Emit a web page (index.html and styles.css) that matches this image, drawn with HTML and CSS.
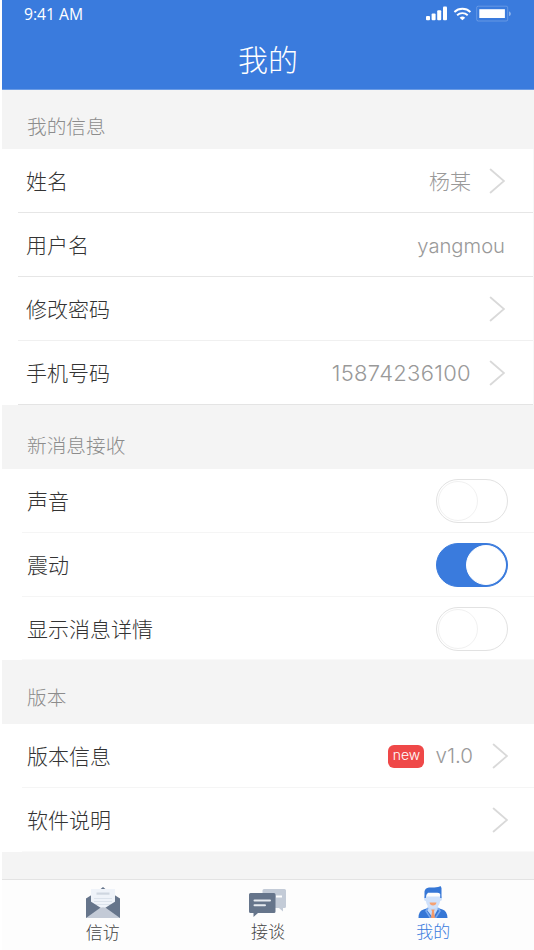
FILE: index.html
```html
<!DOCTYPE html>
<html lang="zh-CN">
<head>
    <meta charset="UTF-8">
    <meta name="viewport" content="width=device-width, initial-scale=1.0">
    <title>我的</title>
    <link rel="stylesheet" href="styles.css">
</head>
<body>

<div class="app">
    <header class="header">
        <div class="status-bar">
            <span class="time">9:41 AM</span>
            <svg class="status-icons" width="86" height="18" viewBox="0 0 86 18">
                <g fill="#fff">
                    <rect x="1" y="12" width="4" height="4.2" rx="1"/>
                    <rect x="6.6" y="9.4" width="4" height="6.8" rx="1"/>
                    <rect x="12.2" y="6.2" width="4" height="10" rx="1"/>
                    <rect x="18" y="2.6" width="4" height="13.6" rx="1"/>
                    <rect x="54.3" y="5.2" width="25.6" height="8.8"/>
                    <path d="M34.6 13.7a4.4 4.4 0 0 1 5.6 0L37.4 16.2z"/>
                </g>
                <g fill="none" stroke="#fff" stroke-width="1.9">
                    <path d="M29.4 8a11.6 11.6 0 0 1 16 0"/>
                    <path d="M32.1 11.2a7.7 7.7 0 0 1 10.6 0"/>
                </g>
                <rect x="51.7" y="2.2" width="31" height="14.8" rx="1.5" fill="none" stroke="#fff" stroke-opacity=".22"/>
                <path d="M84.2 7.4c2 .6 2 4 0 4.6z" fill="#fff" fill-opacity=".5"/>
            </svg>
        </div>
        <h1>我的</h1>
    </header>

    <main>
        <h2 class="group-title first">我的信息</h2>
        <ul class="list info">
            <li><span class="label">姓名</span><span class="value cjk">杨某</span><svg class="arrow" viewBox="0 0 16 26"><path d="M1.6 1.5 15 13 1.6 24.5"/></svg></li>
            <li><span class="label">用户名</span><span class="value name">yangmou</span></li>
            <li><span class="label">修改密码</span><svg class="arrow" viewBox="0 0 16 26"><path d="M1.6 1.5 15 13 1.6 24.5"/></svg></li>
            <li><span class="label">手机号码</span><span class="value phone">15874236100</span><svg class="arrow" viewBox="0 0 16 26"><path d="M1.6 1.5 15 13 1.6 24.5"/></svg></li>
        </ul>

        <h2 class="group-title message">新消息接收</h2>
        <ul class="list switches">
            <li><span class="label">声音</span><span class="switch"></span></li>
            <li><span class="label">震动</span><span class="switch on"></span></li>
            <li><span class="label">显示消息详情</span><span class="switch"></span></li>
        </ul>

        <h2 class="group-title version">版本</h2>
        <ul class="list">
            <li><span class="label">版本信息</span><span class="badge">new</span><span class="value ver">v1.0</span><svg class="arrow" viewBox="0 0 16 26"><path d="M1.6 1.5 15 13 1.6 24.5"/></svg></li>
            <li><span class="label">软件说明</span><svg class="arrow" viewBox="0 0 16 26"><path d="M1.6 1.5 15 13 1.6 24.5"/></svg></li>
        </ul>
    </main>

    <nav class="tabs">
        <a class="tab">
            <!-- envelope -->
            <svg width="34" height="32" viewBox="0 0 34 32">
                <path d="M14 2.5 17 0l3 2.5z" fill="#66758b"/>
                <path d="M0 11.5 5.5 8h23l5.5 3.5V31H0z" fill="#66758b"/>
                <path d="M5 2h24v19H5z" fill="#eff3f9"/>
                <path d="M10.5 5.5h13v2.2h-13z" fill="#cfd6e0"/>
                <path d="M8 11.5h18M8 14.5h18M8 17.5h18" stroke="#dbe2eb"/>
                <path d="M0 11.5 15 21 0 31zM34 11.5 19 21l15 10z" fill="#66758b"/>
                <path d="M0 31 14 21q3-1.5 6 0l14 10z" fill="#c3cad6"/>
            </svg>
            <span>信访</span>
        </a>
        <a class="tab">
            <!-- chat bubbles -->
            <svg width="38" height="30" viewBox="0 0 38 30">
                <path d="M15 1h20.5q1.5 0 1.5 1.5v16q0 1.5-1.5 1.5H34v3.5L30 20H15q-1.5 0-1.5-1.5V2.5Q13.5 1 15 1z" fill="#c3cbd7"/>
                <path d="M27 8.5h6" stroke="#fff" stroke-width="2"/>
                <path d="M1.5 5h23.5q1.5 0 1.5 1.5v17q0 1.5-1.5 1.5H9l-4.5 4V25h-3Q0 25 0 23.5v-17Q0 5 1.5 5z" fill="#66758b"/>
                <path d="M5.5 12.5h15.5M5.5 17.3h10.5" stroke="#e6eaf0" stroke-width="2" stroke-linecap="round"/>
            </svg>
            <span>接谈</span>
        </a>
        <a class="tab active">
            <!-- user -->
            <svg width="30" height="32" viewBox="0 0 30 32">
                <path d="M.5 32q0-7.5 5-8.5l6-2h7l6 2q4.5 1 5 8.5z" fill="#3677d6"/>
                <path d="M10 19h10v4l-5 9-6-8z" fill="#c3dafa"/>
                <path d="M6 10.5h18v2.5q0 2-1.8 2-1.2 7.5-7.2 7.5t-7.2-7.5Q6 15 6 13z" fill="#cfe1fb"/>
                <path d="M6.5 12V5.5Q7 2 11 1.5q6 0 9-.5 2-.5 2.5-1 1.5 1.5 1 5v7h-1.3V8q-1-1.2-3-1.2H10Q8 8 7.8 12z" fill="#3677d6"/>
                <path d="M11.5 16.5h7q-.5 3-3.5 3t-3.5-3z" fill="#f5a173"/>
                <path d="m10 22-2 3 4.5 7M20 22l2 3-4.5 7" stroke="#78a8ed" stroke-width="1.5" fill="none"/>
                <path d="M13.3 23.5h3.4l-.7 2 1 6.5h-4l1-6.5z" fill="#f29a6b"/>
            </svg>
            <span>我的</span>
        </a>
    </nav>
</div>

</body>
</html>
```

FILE: styles.css
```css
/* Global Styles */
*, *::before {
    box-sizing: border-box;
}

body {
    margin: 0;
    background: #fff;
    color: #333;
    font-family: "Noto Sans CJK SC", sans-serif;
    font-weight: 300;
}

.app {
    display: flex;
    flex-direction: column;
    height: 950px;
    padding-left: 2px;
    overflow: hidden;
}

/* Header */
.header {
    height: 90px;
    flex: none;
    background: #3a7bdd;
    border-bottom: 1px solid #6b9ce5;
    color: #fff;
}

.status-bar {
    display: flex;
    justify-content: space-between;
    align-items: center;
    height: 28px;
    padding: 0 23px 0 22px;
}

.time {
    font-family: "Open Sans", sans-serif;
    font-size: 15.7px;
    font-weight: 400;
}

.status-icons {
    margin-top: -3px;
}

h1 {
    margin: 0;
    font-size: 30px;
    font-weight: 300;
    line-height: 60px;
    text-align: center;
}

/* Groups */
main {
    flex: 1;
    background: #f4f4f4;
}

.group-title {
    display: flex;
    align-items: center;
    height: 64px;
    margin: 0;
    padding-left: 25px;
    color: #8c8c8c;
    font-size: 19.7px;
    font-weight: 300;
}

.first {
    height: 59px;
    padding-top: 11px;
}

.message {
    padding-top: 14px;
}

.version {
    padding-top: 8px;
}

.list {
    margin: 0;
    padding: 0 0 0 20px;
    background: #fff;
    list-style: none;
}

.list li {
    display: flex;
    align-items: center;
    height: 64px;
    padding: 0 26px 0 5px;
    border-bottom: 1px solid #f5f5f5;
    font-size: 21px;
}

.list li:last-child {
    border-bottom-color: #f9f9f9;
}

.switches li:last-child {
    height: 63px;
    padding-top: 1px;
}

.info {
    padding-left: 16px;
    border-right: 1px solid #f7f7f7;
}

.info li {
    padding: 0 28px 0 8px;
    border-bottom-color: #e6e6e6;
}

.info li:nth-child(3) {
    border-bottom-color: #f0f0f0;
}

.info li:last-child {
    border-bottom-color: #e4e4e4;
}

.label {
    margin-right: auto;
}

.label,
.cjk {
    margin-bottom: 2px;
}

.value {
    color: #999;
    font-family: Inter, sans-serif;
}

.cjk {
    font-family: "Noto Sans CJK SC", sans-serif;
}

.name {
    margin-top: 2px;
    font-size: 20.2px;
}

.phone {
    font-size: 22px;
    letter-spacing: 0.3px;
}

.ver {
    font-size: 20.6px;
}

.arrow {
    width: 16px;
    height: 26px;
    margin-left: 18px;
    fill: none;
    stroke: #d9d9d9;
    stroke-width: 1.8;
    stroke-linecap: round;
}

.ver + .arrow {
    margin-left: 19px;
}

/* Switch */
.switch {
    width: 72px;
    height: 44px;
    padding: 1px;
    border: 1px solid #e2e2e2;
    border-radius: 22px;
}

.switch::before {
    content: "";
    display: block;
    width: 40px;
    height: 40px;
    border: 1px solid #f1f1f1;
    border-radius: 50%;
    background: #fff;
}

.switch.on {
    border-color: #3a7bdd;
    background: #3a7bdd;
}

.switch.on::before {
    margin-left: 28px;
    border-color: #fff;
}

/* Version badge */
.badge {
    width: 36px;
    height: 23px;
    margin: 1px 11px 0 0;
    border-radius: 6px;
    background: #ef4848;
    color: #fff;
    font-family: Inter, sans-serif;
    font-size: 14px;
    line-height: 20px;
    text-align: center;
}

/* Bottom tabs */
.tabs {
    display: flex;
    flex: none;
    height: 71px;
    padding: 0 18px;
    border-top: 1px solid #e3e3e3;
    background: #fdfdfd;
}

.tab {
    display: flex;
    flex: 1;
    flex-direction: column;
    align-items: center;
    justify-content: flex-end;
    color: #444;
    font-size: 17px;
    line-height: 25px;
    padding-bottom: 6px;
}

.tab:nth-child(n+2) {
    padding-bottom: 7px;
}

.active {
    color: #3a7bdd;
}
```
